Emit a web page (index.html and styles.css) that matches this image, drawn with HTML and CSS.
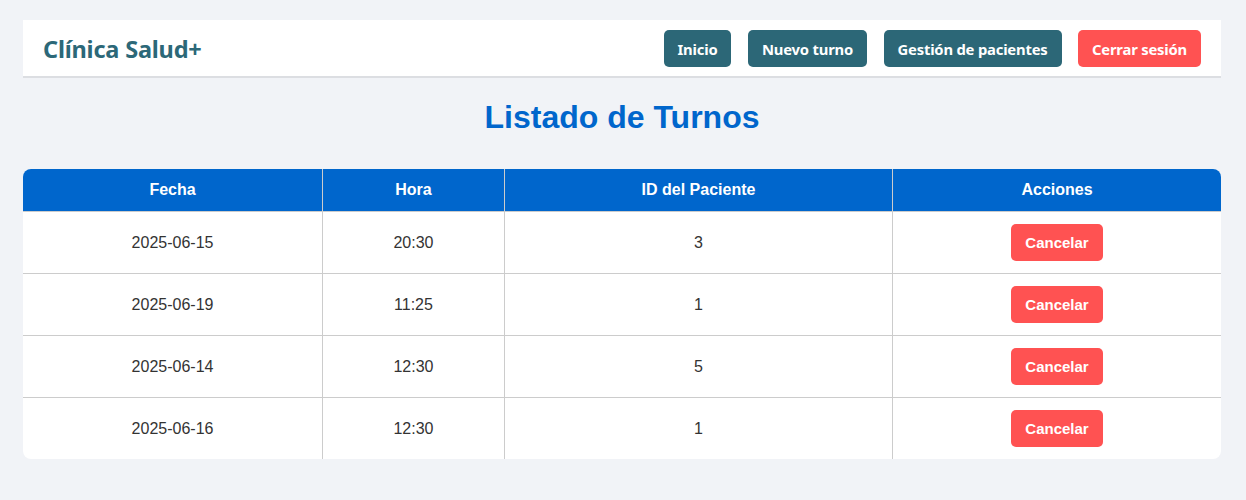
FILE: index.html
```html
<!DOCTYPE html>
<html lang="es">
<head>
<meta charset="utf-8">
<title>Listado de Turnos</title>
<link rel="stylesheet" href="styles.css">
</head>
<body>
<div class="page">
  <header class="topbar">
    <div class="brand">Clínica Salud+</div>
    <nav class="nav">
      <a class="nav-btn">Inicio</a>
      <a class="nav-btn">Nuevo turno</a>
      <a class="nav-btn">Gestión de pacientes</a>
      <a class="nav-btn danger">Cerrar sesión</a>
    </nav>
  </header>
  <h1 class="title">Listado de Turnos</h1>
  <table class="turnos">
    <colgroup>
      <col class="c1"><col class="c2"><col class="c3"><col class="c4">
    </colgroup>
    <thead>
      <tr><th>Fecha</th><th>Hora</th><th>ID del Paciente</th><th>Acciones</th></tr>
    </thead>
    <tbody>
      <tr><td>2025-06-15</td><td>20:30</td><td>3</td><td><button class="cancel">Cancelar</button></td></tr>
      <tr><td>2025-06-19</td><td>11:25</td><td>1</td><td><button class="cancel">Cancelar</button></td></tr>
      <tr><td>2025-06-14</td><td>12:30</td><td>5</td><td><button class="cancel">Cancelar</button></td></tr>
      <tr><td>2025-06-16</td><td>12:30</td><td>1</td><td><button class="cancel">Cancelar</button></td></tr>
    </tbody>
  </table>
</div>
</body>
</html>
```
FILE: styles.css
```css
* { box-sizing: border-box; }
html, body { margin: 0; padding: 0; }
body {
  background: #f1f3f7;
  font-family: "Liberation Sans", Arial, sans-serif;
  color: #333;
}
.page {
  width: 1198px;
  margin-left: 23px;
  padding-top: 20px;
}
.topbar {
  background: #fff;
  height: 58px;
  border-bottom: 2px solid #dcdee2;
  display: flex;
  align-items: center;
  justify-content: space-between;
  padding: 0 20px 0 20px;
}
.brand {
  font-family: "Noto Sans", "Open Sans", sans-serif;
  font-weight: 700;
  font-size: 23.5px;
  color: #2c6878;
  letter-spacing: -0.2px;
  padding-top: 1px;
}
.nav {
  display: flex;
  gap: 16.5px;
  align-items: center;
  padding-top: 1px;
}
.nav-btn {
  font-family: "Noto Sans", "Open Sans", sans-serif;
  font-weight: 700;
  font-size: 14.8px;
  letter-spacing: -0.2px;
  color: #fff;
  background: #2c6777;
  border-radius: 5px;
  height: 37px;
  display: flex;
  align-items: center;
  padding: 0 14px;
}
.nav-btn.danger { background: #ff5252; }
.title {
  margin: 0;
  text-align: center;
  color: #0066cc;
  font-size: 32px;
  font-weight: 700;
  padding-top: 21px;
  height: 91px;
}
.turnos {
  width: 1198px;
  border-collapse: separate;
  border-spacing: 0;
  background: #fff;
  border-radius: 8px;
  overflow: hidden;
  font-size: 16px;
}
.c1 { width: 300px; }
.c2 { width: 182px; }
.c3 { width: 388px; }
.c4 { width: 328px; }
.turnos th {
  background: #0066cc;
  color: #fff;
  font-weight: 700;
  height: 43px;
  text-align: center;
  border-right: 1px solid #ccc;
  border-bottom: 1px solid #ccc;
  padding: 0;
}
.turnos td {
  height: 62px;
  text-align: center;
  border-right: 1px solid #ccc;
  border-bottom: 1px solid #ccc;
  padding: 0;
  color: #333;
}
.turnos th:last-child, .turnos td:last-child { border-right: none; }
.turnos tbody tr:last-child td { border-bottom: none; height: 61px; }
.cancel {
  font-family: "Liberation Sans", Arial, sans-serif;
  font-weight: 700;
  font-size: 15px;
  color: #fff;
  background: #ff5252;
  border: none;
  border-radius: 5px;
  height: 37px;
  padding: 0 14px;
  width: 92px;
}
```
